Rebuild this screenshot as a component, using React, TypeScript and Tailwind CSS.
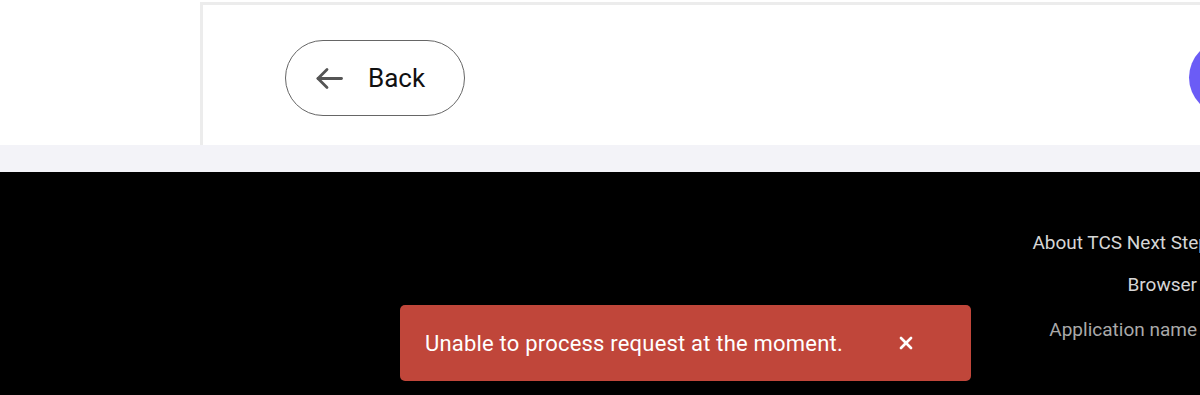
import { X } from 'lucide-react';

function BackArrow() {
  return (
    <svg width="27" height="23" viewBox="0 0 27 23" fill="none" stroke="#555555" strokeWidth="2.8" strokeLinecap="round" strokeLinejoin="round">
      <path d="M25.5 11.5H2" />
      <path d="M11 2.5 2 11.5 11 20.5" />
    </svg>
  );
}

export default function App() {
  return (
    <div className="relative w-[1200px] h-[395px] overflow-hidden bg-white font-['Roboto','Liberation_Sans',sans-serif]">
      {/* Page body with card */}
      <div className="flex h-[145px]">
        <div className="w-[200px] shrink-0 bg-white" />
        <div className="flex-1 mt-[2px] border-l-[3px] border-t-[3px] border-[#ececec] bg-white flex items-start justify-between pl-[82px] pt-[35px]">
          <button className="flex items-center h-[76px] w-[180px] rounded-full border-[1.6px] border-[#666666] bg-white pl-[30px] gap-[25px] text-[26px] text-[#111111]">
            <BackArrow />
            <span>Back</span>
          </button>
          {/* next button, mostly off screen */}
          <button aria-label="Next" className="h-[75px] w-[160px] -mr-[149px] rounded-full bg-[#6b5cf6]" />
        </div>
      </div>

      <div className="h-[27px] bg-[#f3f3f8]" />

      {/* Footer */}
      <footer className="h-[223px] bg-black flex flex-col items-end pt-[59px] text-[19px] leading-[24px] whitespace-nowrap">
        <span className="text-[#d6d6d6] -mr-[9px]">About TCS Next Step</span>
        <span className="text-[#d6d6d6] mr-[3px] mt-[18px]">Browser</span>
        <span className="text-[#a9a9a9] mr-[3px] mt-[21px]">Application name</span>
      </footer>

      {/* Error toast */}
      <div className="absolute left-[400px] top-[305px] w-[571px] h-[76px] rounded-[5px] bg-[#c0463a] flex items-center pl-[25px] text-white">
        <span className="text-[22px] tracking-[0.2px]">Unable to process request at the moment.</span>
        <button className="ml-[53px] text-white">
          <X size={20} strokeWidth={3.2} />
        </button>
      </div>
    </div>
  );
}
